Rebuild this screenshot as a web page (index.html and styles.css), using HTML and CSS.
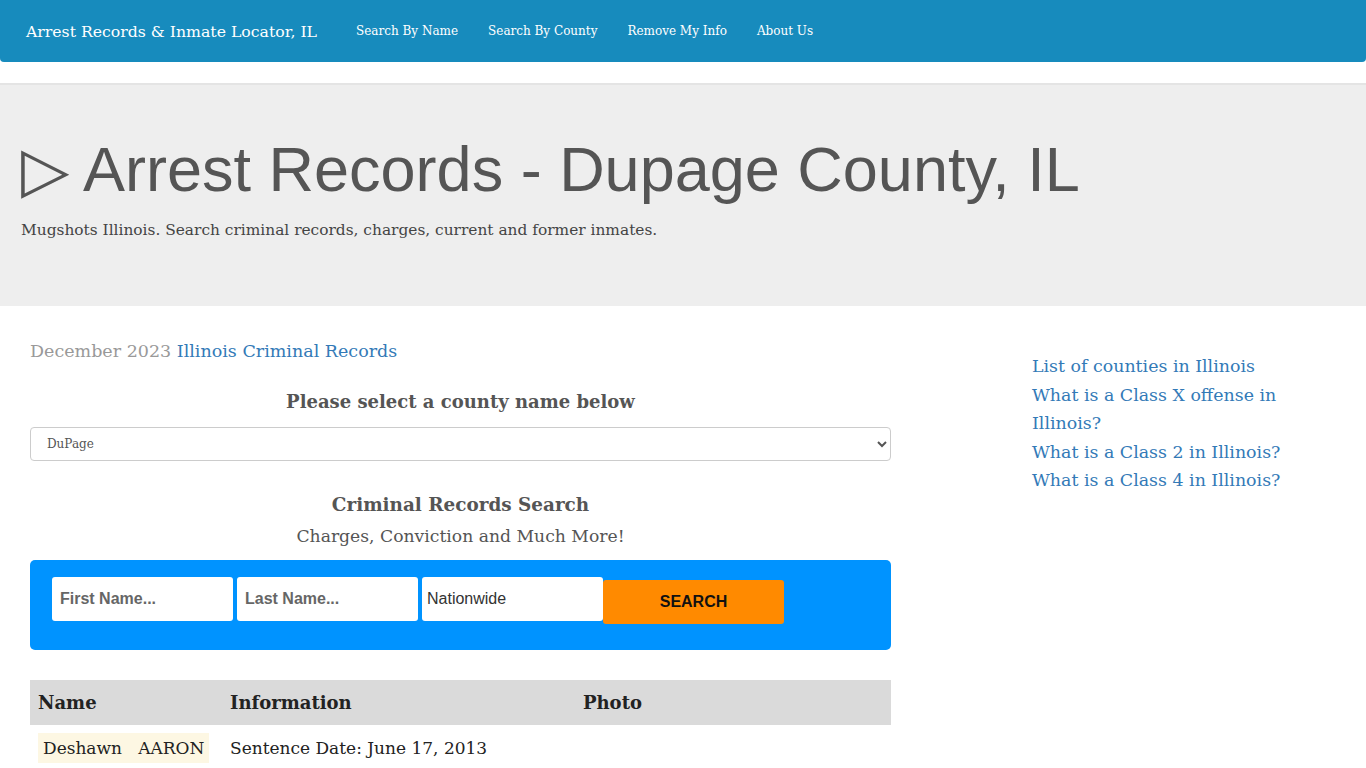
FILE: index.html
```html
<!DOCTYPE html>
<html lang="en">
<head>
    <meta charset="UTF-8">
    <meta name="viewport" content="width=device-width, initial-scale=1.0">
    <title>Arrest Records - Dupage County, IL</title>
    <link rel="stylesheet" href="styles.css">
</head>
<body>
    <nav class="navbar">
        <a class="brand" href="#">Arrest Records &amp; Inmate Locator, IL</a>
        <ul class="nav-links">
            <li><a href="#">Search By Name</a></li>
            <li><a href="#">Search By County</a></li>
            <li><a href="#">Remove My Info</a></li>
            <li><a href="#">About Us</a></li>
        </ul>
    </nav>

    <header class="jumbotron">
        <h1>&#9655; Arrest Records - Dupage County, IL</h1>
        <p>Mugshots Illinois. Search criminal records, charges, current and former inmates.</p>
    </header>

    <div class="content">
        <main class="main-col">
            <p class="date-line">December 2023 <a href="#">Illinois Criminal Records</a></p>

            <h3 class="center-title">Please select a county name below</h3>
            <select class="county-select">
                <option>DuPage</option>
                <option>Cook</option>
                <option>Kane</option>
                <option>Lake</option>
                <option>Will</option>
            </select>

            <h3 class="center-title search-title">Criminal Records Search</h3>
            <p class="center-sub">Charges, Conviction and Much More!</p>

            <form class="search-box" onsubmit="return false">
                <input type="text" class="field" placeholder="First Name...">
                <input type="text" class="field" placeholder="Last Name...">
                <input type="text" class="field plain" value="Nationwide">
                <button type="submit" class="search-btn">SEARCH</button>
            </form>

            <table class="records">
                <thead>
                    <tr>
                        <th class="col-name">Name</th>
                        <th class="col-info">Information</th>
                        <th>Photo</th>
                    </tr>
                </thead>
                <tbody>
                    <tr>
                        <td><span class="person">Deshawn &nbsp; AARON</span></td>
                        <td>Sentence Date: June 17, 2013</td>
                        <td></td>
                    </tr>
                </tbody>
            </table>
        </main>

        <aside class="side-col">
            <a href="#">List of counties in Illinois</a>
            <a href="#">What is a Class X offense in Illinois?</a>
            <a href="#">What is a Class 2 in Illinois?</a>
            <a href="#">What is a Class 4 in Illinois?</a>
        </aside>
    </div>
</body>
</html>
```

FILE: styles.css
```css
body {
    margin: 0;
    font-family: "DejaVu Serif", Georgia, serif;
    color: #333;
    background-color: #fff;
}
a {
    color: #337ab7;
    text-decoration: none;
}

/* top bar */
.navbar {
    display: flex;
    align-items: center;
    height: 62px;
    background-color: #178bbd;
    border-radius: 0 0 4px 4px;
    padding: 0 26px;
}
.brand {
    color: #fff;
    font-size: 15.7px;
    margin-right: 24px;
}
.nav-links {
    display: flex;
    list-style: none;
    margin: 0;
    padding: 0;
}
.nav-links a {
    display: block;
    color: #fff;
    font-size: 12px;
    padding: 0 15px;
}

/* page banner */
.jumbotron {
    margin-top: 21px;
    height: 223px;
    box-sizing: border-box;
    background-color: #eee;
    border-top: 2px solid #e4e4e4;
    padding: 48px 21px 0;
}
.jumbotron h1 {
    margin: 0;
    font-family: "Liberation Sans", Arial, sans-serif;
    font-weight: normal;
    font-size: 63px;
    line-height: 72px;
    color: #555;
}
.jumbotron p {
    margin: 16px 0 0;
    font-size: 15.4px;
    color: #444;
}

/* body columns */
.content {
    display: flex;
    padding: 30px 30px 0;
}
.main-col {
    width: 861px;
    flex-shrink: 0;
}
.side-col {
    display: flex;
    flex-direction: column;
    width: 250px;
    margin-left: 141px;
    padding-top: 16px;
    font-size: 17.4px;
    line-height: 28.5px;
}

.date-line {
    margin: 0;
    font-size: 17.5px;
    line-height: 30px;
    color: #999;
}
.center-title {
    margin: 21px 0 0;
    text-align: center;
    font-size: 18px;
    line-height: 30px;
    color: #555;
}
.county-select {
    display: block;
    width: 100%;
    height: 34px;
    margin-top: 10px;
    padding: 0 12px;
    font-family: "DejaVu Serif", Georgia, serif;
    font-size: 12px;
    color: #555;
    background-color: #fff;
    border: 1px solid #ccc;
    border-radius: 4px;
}
.search-title {
    margin-top: 29px;
    font-size: 18.4px;
}
.center-sub {
    margin: 0;
    text-align: center;
    font-size: 17.2px;
    line-height: 32px;
    color: #555;
}

/* search form */
.search-box {
    display: flex;
    align-items: flex-start;
    height: 90px;
    box-sizing: border-box;
    margin-top: 8px;
    padding: 17px 22px 0;
    background-color: #0093ff;
    border-radius: 5px;
}
.field {
    width: 181px;
    height: 44px;
    box-sizing: border-box;
    margin-right: 4px;
    padding: 0 8px;
    border: none;
    border-radius: 3px;
    font-family: "Liberation Sans", Arial, sans-serif;
    font-size: 16px;
    color: #333;
}
.field::placeholder {
    color: #666;
    font-weight: bold;
}
.field.plain {
    margin-right: 0;
    padding-left: 5px;
}
.search-btn {
    width: 181px;
    height: 44px;
    margin-top: 3px;
    border: none;
    border-radius: 3px;
    background-color: #ff8a00;
    font-family: "Liberation Sans", Arial, sans-serif;
    font-weight: bold;
    font-size: 16px;
    color: #111;
}

/* results table */
.records {
    width: 100%;
    margin-top: 30px;
    border-collapse: collapse;
}
.records th {
    height: 45px;
    padding: 0 8px;
    text-align: left;
    background-color: #dadada;
    font-size: 18px;
    color: #222;
}
.records .col-name { width: 176px; }
.records .col-info { width: 337px; }
.records td {
    padding: 8px 8px 0;
    vertical-align: top;
    font-size: 17px;
    line-height: 30px;
    color: #222;
}
.person {
    display: inline-block;
    padding: 0 5px;
    background-color: #fdf7e3;
}
```
